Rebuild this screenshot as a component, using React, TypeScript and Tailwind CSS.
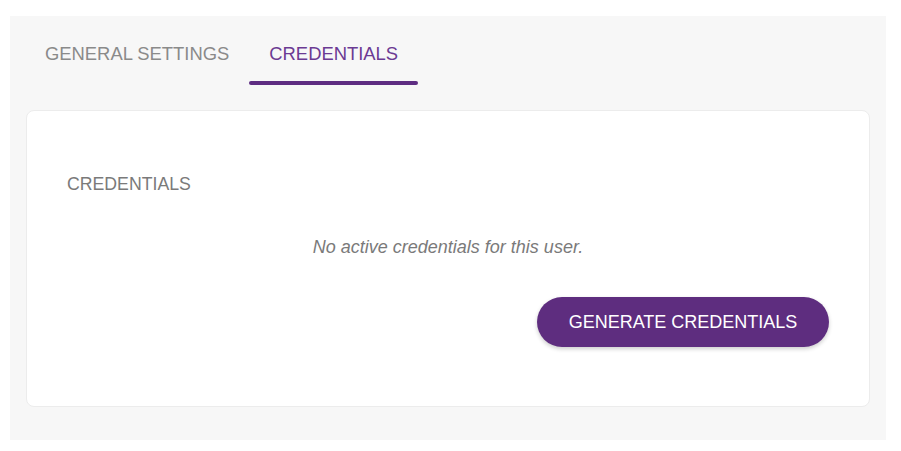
import { useState } from "react"

const tabs = ["General Settings", "Credentials"]

export default function App() {
  const [active, setActive] = useState(1)

  return (
    <div className="min-h-[451px] bg-white pt-[16px] pl-[10px] font-['Liberation_Sans',Arial,sans-serif]">
      <div className="w-[876px] h-[424px] bg-[#f7f7f7] pt-[6px]">
        {/* tabs */}
        <div className="flex pl-[15px]">
          {tabs.map((t, i) => (
            <button
              key={t}
              onClick={() => setActive(i)}
              className={`relative h-[63px] px-5 flex items-center uppercase text-[18.4px] ${
                i === active ? "text-[#6b3a93]" : "text-[#8a8a8a]"
              }`}
            >
              {t}
              {i === active && (
                <span className="absolute left-0 right-0 bottom-0 h-[4px] rounded-full bg-[#5e2d82]" />
              )}
            </button>
          ))}
        </div>

        <div className="mx-[16px] mt-[25px] h-[297px] bg-white rounded-lg border border-[#ececec] px-[40px] pt-[61px]">
          <h3 className="uppercase text-[17.7px] leading-6 text-[#7a7a7a]">Credentials</h3>
          <p className="mt-[39px] text-center italic text-[18px] leading-6 text-[#7a7a7a]">
            No active credentials for this user.
          </p>
          <div className="mt-[38px] flex justify-end">
            <button className="h-[50px] w-[292px] rounded-full bg-[#5e2d7f] text-white uppercase text-[18px] shadow-[0_2px_4px_rgba(0,0,0,0.2)]">
              Generate Credentials
            </button>
          </div>
        </div>
      </div>
    </div>
  )
}
